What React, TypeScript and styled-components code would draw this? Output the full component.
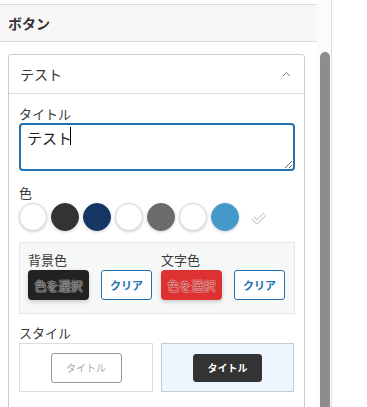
import React from "react";
import styled, { createGlobalStyle } from "styled-components";

const GlobalStyle = createGlobalStyle`
  body {
    margin: 0;
    background: #fff;
    font-family: "Noto Sans CJK JP", "Noto Sans", sans-serif;
    color: #1e1e1e;
  }
`;

const Page = styled.div`
  display: flex;
  height: 407px;
  overflow: hidden;
`;

const Sidebar = styled.div`
  width: 317px;
  padding-top: 4px;
  box-sizing: border-box;
`;

const PanelHeader = styled.div`
  height: 36px;
  display: flex;
  align-items: center;
  padding: 0 8px;
  background: #f7f7f7;
  border-top: 1px solid #dcdcdc;
  border-bottom: 1px solid #dcdcdc;
  font-size: 14px;
  font-weight: bold;
  color: #333;
`;

const PanelBody = styled.div`
  padding: 12px 12px 0 8px;
`;

const Card = styled.div`
  border: 1px solid #ccc;
  border-radius: 3px;
  height: 400px;
`;

const CardHeader = styled.div`
  height: 38px;
  display: flex;
  align-items: center;
  justify-content: space-between;
  padding: 0 13px 0 11px;
  border-bottom: 1px solid #ddd;
  font-size: 14px;
  color: #333;
`;

const CardBody = styled.div`
  padding: 11px 9px 0 10px;
`;

const Label = styled.div<{ $gap?: number }>`
  font-size: 13px;
  line-height: 17px;
  color: #3c3c3c;
  margin-bottom: ${(p) => p.$gap ?? 0}px;
`;

const InputWrap = styled.div`
  position: relative;
  margin-bottom: 13px;
`;

const TitleInput = styled.textarea`
  display: block;
  width: 100%;
  height: 48px;
  box-sizing: border-box;
  border: 2px solid #2271b1;
  border-radius: 4px;
  padding: 3px 6px;
  font-family: "Noto Sans CJK JP", "Noto Sans", sans-serif;
  font-size: 15px;
  line-height: 20px;
  color: #1e1e1e;
  outline: none;
`;

const Caret = styled.span`
  position: absolute;
  left: 51px;
  top: 4px;
  width: 1px;
  height: 18px;
  background: #000;
`;

const Swatches = styled.div`
  display: flex;
  align-items: center;
  gap: 4px;
  margin-top: 2px;
  margin-bottom: 11px;
`;

const Swatch = styled.span<{ $color: string }>`
  width: 28px;
  height: 28px;
  box-sizing: border-box;
  border-radius: 50%;
  background: ${(p) => p.$color};
  border: 1px solid ${(p) => (p.$color === "#fff" ? "#d6d6d6" : p.$color)};
  box-shadow: 0 1px 3px rgba(0, 0, 0, 0.18);
`;

const CheckMark = styled.svg`
  margin-left: 8px;
  margin-top: 2px;
`;

const ColorPanel = styled.div`
  display: grid;
  grid-template-columns: 124px 124px;
  gap: 9px;
  padding: 8px 8px 13px 8px;
  background: #f6f7f7;
  border: 1px solid #e6e6e6;
  margin-bottom: 10px;
`;

const ColorGroup = styled.div`
  display: flex;
  flex-direction: column;
`;

const ButtonRow = styled.div`
  display: flex;
  justify-content: space-between;
  margin-top: 2px;
`;

const PickButton = styled.button<{ $bg: string; $fg: string }>`
  width: 61px;
  height: 30px;
  border: none;
  border-radius: 4px;
  background: ${(p) => p.$bg};
  color: ${(p) => p.$fg};
  font-family: "Noto Sans CJK JP", sans-serif;
  font-size: 12px;
  padding: 0;
  box-shadow: 0 2px 4px rgba(0, 0, 0, 0.18);
  text-shadow: -1px 0 rgba(255, 255, 255, 0.35), 1px 0 rgba(255, 255, 255, 0.35),
    0 -1px rgba(255, 255, 255, 0.35), 0 1px rgba(255, 255, 255, 0.35);
`;

const ClearButton = styled.button`
  width: 51px;
  height: 30px;
  border: 1px solid #2271b1;
  border-radius: 3px;
  background: #fff;
  color: #2271b1;
  font-family: "Noto Sans CJK JP", sans-serif;
  font-size: 11px;
  font-weight: bold;
  padding: 0;
`;

const StyleGrid = styled.div`
  display: grid;
  grid-template-columns: 134px 133px;
  gap: 8px;
  margin-top: 2px;
`;

const StyleOption = styled.div<{ $active?: boolean }>`
  height: 49px;
  box-sizing: border-box;
  display: flex;
  align-items: center;
  justify-content: center;
  border: 1px solid ${(p) => (p.$active ? "#c6cbd3" : "#dddddd")};
  background: ${(p) => (p.$active ? "#edf5ff" : "#fff")};
`;

const SampleButton = styled.span<{ $filled?: boolean }>`
  display: flex;
  align-items: center;
  justify-content: center;
  box-sizing: border-box;
  width: ${(p) => (p.$filled ? "69px" : "71px")};
  height: ${(p) => (p.$filled ? "28px" : "30px")};
  border-radius: 3px;
  font-size: 10px;
  border: 1px solid ${(p) => (p.$filled ? "#333" : "#999")};
  background: ${(p) => (p.$filled ? "#333" : "#fff")};
  color: ${(p) => (p.$filled ? "#fff" : "#aaa")};
  font-weight: ${(p) => (p.$filled ? "bold" : "normal")};
`;

const ScrollTrack = styled.div`
  width: 15px;
  background: #fbfbfb;
  border-right: 1px solid #dedede;
  padding-top: 52px;
  box-sizing: border-box;
`;

const ScrollThumb = styled.div`
  margin-left: 3px;
  width: 10px;
  height: 360px;
  background: #8d8d8d;
  border-radius: 5px 5px 0 0;
`;

const swatchColors = ["#fff", "#333333", "#153563", "#fff", "#6b6b6b", "#fff", "#4599c9"];

function App() {
    return (
        <Page>
            <GlobalStyle />
            <Sidebar>
                <PanelHeader>ボタン</PanelHeader>
                <PanelBody>
                    <Card>
                        <CardHeader>
                            <span>テスト</span>
                            <svg width="9" height="6" viewBox="0 0 9 6">
                                <polyline points="1,5 4.5,1.5 8,5" fill="none" stroke="#777" strokeWidth="1" />
                            </svg>
                        </CardHeader>
                        <CardBody>
                            <Label $gap={1}>タイトル</Label>
                            <InputWrap>
                                <TitleInput defaultValue="テスト" />
                                <Caret />
                            </InputWrap>
                            <Label>色</Label>
                            <Swatches>
                                {swatchColors.map((c, i) => (
                                    <Swatch key={i} $color={c} />
                                ))}
                                <CheckMark width="16" height="14" viewBox="0 0 16 14">
                                    <polyline points="2,7 6,11 14,3" fill="none" stroke="#c8c8c8" strokeWidth="4" strokeLinejoin="round" />
                                    <polyline points="2,7 6,11 14,3" fill="none" stroke="#fff" strokeWidth="2" strokeLinejoin="round" />
                                </CheckMark>
                            </Swatches>
                            <ColorPanel>
                                <ColorGroup>
                                    <Label>背景色</Label>
                                    <ButtonRow>
                                        <PickButton $bg="#222" $fg="#555">色を選択</PickButton>
                                        <ClearButton>クリア</ClearButton>
                                    </ButtonRow>
                                </ColorGroup>
                                <ColorGroup>
                                    <Label>文字色</Label>
                                    <ButtonRow>
                                        <PickButton $bg="#dc3232" $fg="#c23a3a">色を選択</PickButton>
                                        <ClearButton>クリア</ClearButton>
                                    </ButtonRow>
                                </ColorGroup>
                            </ColorPanel>
                            <Label>スタイル</Label>
                            <StyleGrid>
                                <StyleOption>
                                    <SampleButton>タイトル</SampleButton>
                                </StyleOption>
                                <StyleOption $active>
                                    <SampleButton $filled>タイトル</SampleButton>
                                </StyleOption>
                            </StyleGrid>
                        </CardBody>
                    </Card>
                </PanelBody>
            </Sidebar>
            <ScrollTrack>
                <ScrollThumb />
            </ScrollTrack>
        </Page>
    );
}

export default App;
